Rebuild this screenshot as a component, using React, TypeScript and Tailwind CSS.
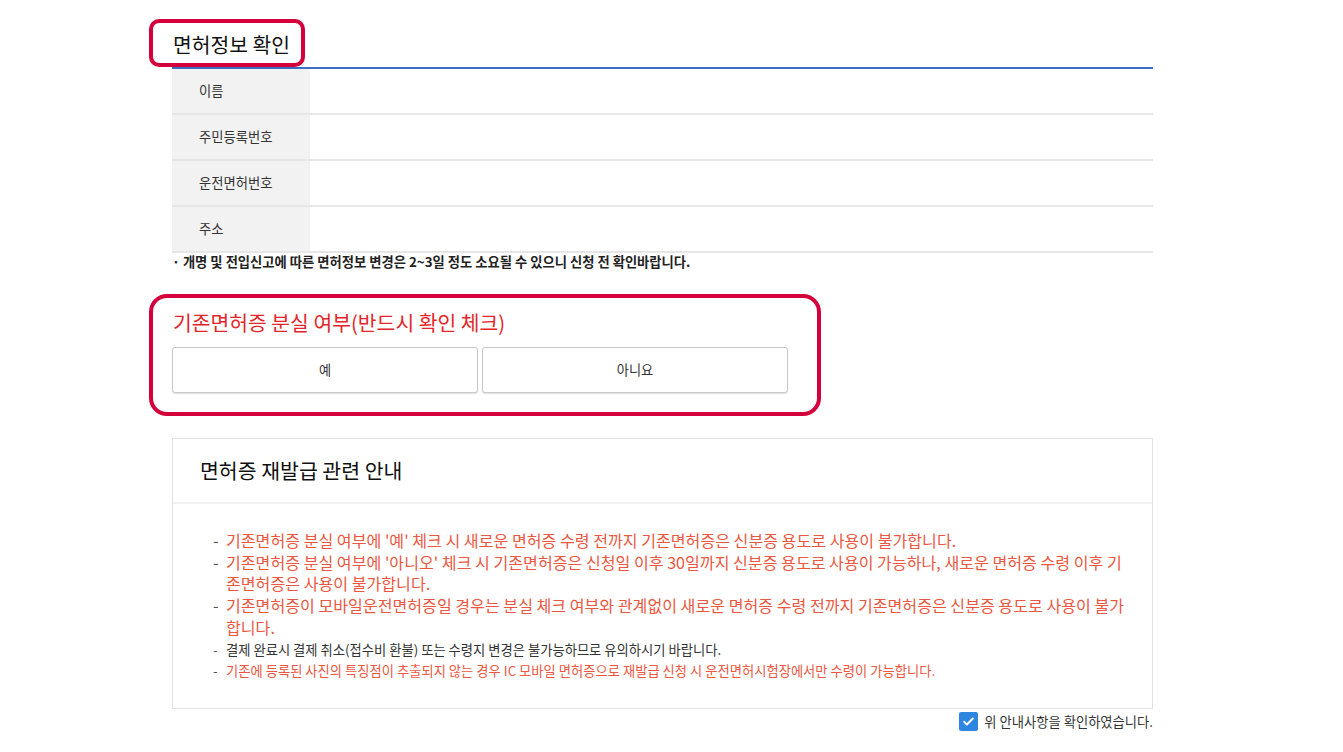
import React from 'react';

const FONT = { fontFamily: '"Noto Sans CJK KR", "Noto Sans", sans-serif' };

const rows = ['이름', '주민등록번호', '운전면허번호', '주소'];

const notices: { text: string; red: boolean; small?: boolean }[] = [
  { text: "기존면허증 분실 여부에 '예' 체크 시 새로운 면허증 수령 전까지 기존면허증은 신분증 용도로 사용이 불가합니다.", red: true },
  { text: "기존면허증 분실 여부에 '아니오' 체크 시 기존면허증은 신청일 이후 30일까지 신분증 용도로 사용이 가능하나, 새로운 면허증 수령 이후 기존면허증은 사용이 불가합니다.", red: true },
  { text: '기존면허증이 모바일운전면허증일 경우는 분실 체크 여부와 관계없이 새로운 면허증 수령 전까지 기존면허증은 신분증 용도로 사용이 불가합니다.', red: true },
  { text: '결제 완료시 결제 취소(접수비 환불) 또는 수령지 변경은 불가능하므로 유의하시기 바랍니다.', red: false, small: true },
  { text: '기존에 등록된 사진의 특징점이 추출되지 않는 경우 IC 모바일 면허증으로 재발급 신청 시 운전면허시험장에서만 수령이 가능합니다.', red: true, small: true },
];

export default function App() {
  const [lost, setLost] = React.useState<'yes' | 'no' | null>(null);
  const [agreed, setAgreed] = React.useState(true);

  return (
    <div className="min-h-[752px] w-full bg-white" style={FONT}>
      <div className="ml-[172px] w-[981px] pt-[19px]">
        {/* 면허정보 확인 */}
        <div className="-ml-[23px] flex h-[48px] w-[156px] items-center rounded-[10px] border-4 border-[#d4003c] pl-[20px] pt-[2px]">
          <h2 className="text-[20.4px] leading-none text-[#111]">면허정보 확인</h2>
        </div>
        <div className="border-t-2 border-[#3b6ec2]">
          {rows.map((label) => (
            <div key={label} className="flex h-[46px] border-b-2 border-[#e6e6e6]">
              <div className="flex w-[138px] items-center bg-[#f2f2f2] pl-[27px] text-[13.3px] text-[#333]">
                {label}
              </div>
              <div className="flex-1" />
            </div>
          ))}
        </div>
        <p className="mt-[1px] text-[13.3px] font-bold leading-[16px] text-[#222]">
          · 개명 및 전입신고에 따른 면허정보 변경은 2~3일 정도 소요될 수 있으니 신청 전 확인바랍니다.
        </p>

        {/* 기존면허증 분실 여부 */}
        <div className="-ml-[23px] mt-[24px] h-[122px] w-[672px] rounded-[18px] border-4 border-[#d4003c] pl-[19px] pt-[11px]">
          <h3 className="pl-[1px] text-[20.4px] leading-[26px] text-[#e4262b]">기존면허증 분실 여부(반드시 확인 체크)</h3>
          <div className="mt-[12px] flex gap-[4px]">
            <button
              onClick={() => setLost('yes')}
              className={`h-[46px] w-[306px] rounded-[3px] border border-[#c9c9c9] bg-white text-[13.2px] text-[#333] shadow-[0_1px_1px_rgba(0,0,0,0.12)] ${lost === 'yes' ? 'border-[#3b6ec2]' : ''}`}
            >
              예
            </button>
            <button
              onClick={() => setLost('no')}
              className={`h-[46px] w-[306px] rounded-[3px] border border-[#c9c9c9] bg-white text-[13.2px] text-[#333] shadow-[0_1px_1px_rgba(0,0,0,0.12)] ${lost === 'no' ? 'border-[#3b6ec2]' : ''}`}
            >
              아니요
            </button>
          </div>
        </div>

        {/* 면허증 재발급 관련 안내 */}
        <div className="mt-[22px] border border-[#e2e2e2]">
          <div className="flex h-[65px] items-center border-b-2 border-[#f0f0f0] pl-[27px]">
            <h3 className="text-[20.5px] text-[#111]">면허증 재발급 관련 안내</h3>
          </div>
          <ul className="pb-[26px] pl-[40px] pr-[25px] pt-[26px]">
            {notices.map((n, i) => (
              <li
                key={i}
                className={`flex leading-[21.7px] ${n.small ? 'text-[13.3px]' : 'text-[16.1px]'} ${n.red ? 'text-[#eb5741]' : 'text-[#333]'}`}
              >
                <span className="w-[13px] shrink-0 text-[#555]">-</span>
                <span className="flex-1">{n.text}</span>
              </li>
            ))}
          </ul>
        </div>

        <label className="mt-[3px] flex cursor-pointer items-center justify-end gap-[6px]">
          <span
            onClick={() => setAgreed(!agreed)}
            className={`flex h-[19px] w-[19px] items-center justify-center rounded-[2px] ${agreed ? 'bg-[#2e86e0]' : 'border border-[#bbb] bg-white'}`}
          >
            {agreed && (
              <svg width="13" height="13" viewBox="0 0 24 24" fill="none" stroke="white" strokeWidth="3.5" strokeLinecap="round" strokeLinejoin="round">
                <path d="M4 12.5l5 5L20 6.5" />
              </svg>
            )}
          </span>
          <span className="text-[13.3px] text-[#333]">위 안내사항을 확인하였습니다.</span>
        </label>
      </div>
    </div>
  );
}
